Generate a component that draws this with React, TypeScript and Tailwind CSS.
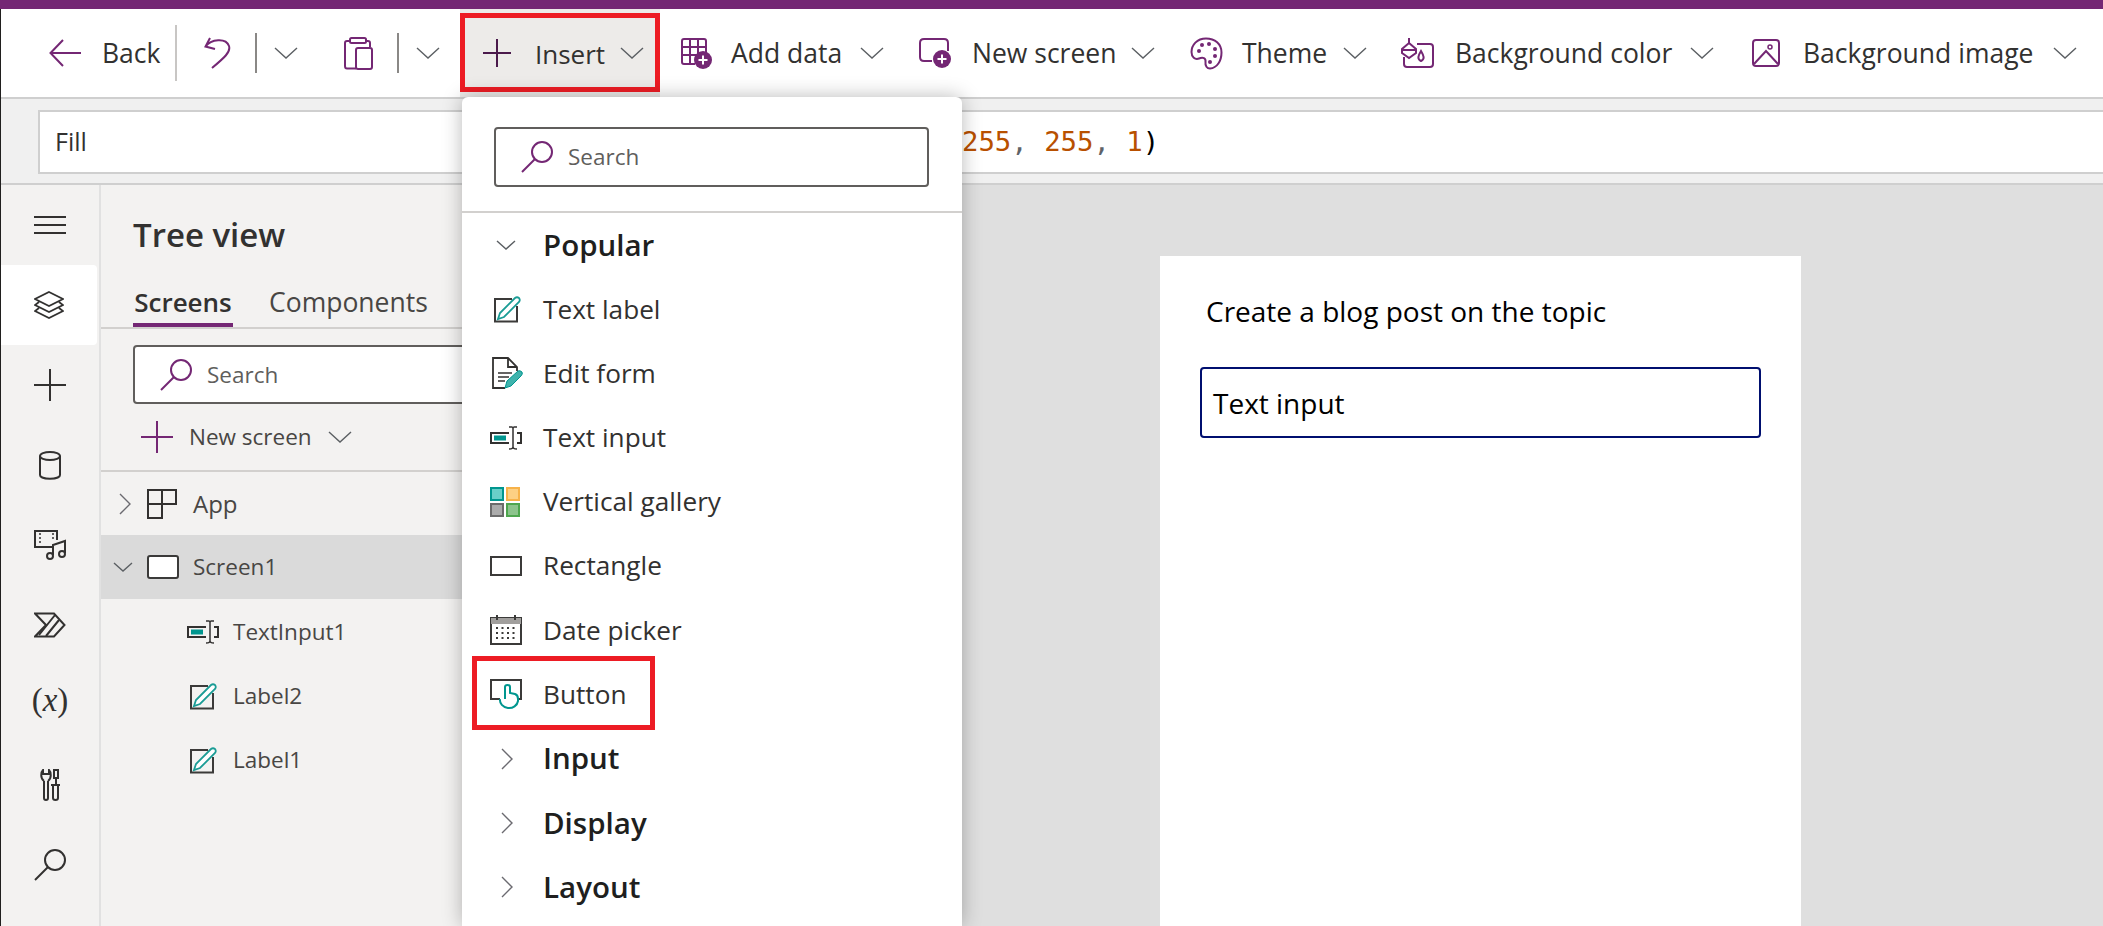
import type { ReactNode } from "react";

const PURPLE = "#742774";
const INK = "#323130";
const TEAL = "#00968f";

function Svg({ w, h, className, children }: { w: number; h: number; className?: string; children: ReactNode }) {
  return (
    <svg width={w} height={h} viewBox={`0 0 ${w} ${h}`} fill="none" className={`shrink-0 ${className ?? ""}`}>
      {children}
    </svg>
  );
}

function ChevronDown({ className, color = "#5b5f63", w = 24 }: { className?: string; color?: string; w?: number }) {
  const h = Math.round(w / 2);
  return (
    <Svg w={w} h={h} className={className}>
      <path d={`M1 1 L${w / 2} ${h - 1} L${w - 1} 1`} stroke={color} strokeWidth="1.4" />
    </Svg>
  );
}

function ChevronRight({ className }: { className?: string }) {
  return (
    <Svg w={12} h={22} className={className}>
      <path d="M1 1 L11 11 L1 21" stroke="#6b6a70" strokeWidth="1.4" />
    </Svg>
  );
}

function Plus({ size = 28, color = INK, className }: { size?: number; color?: string; className?: string }) {
  return (
    <Svg w={size} h={size} className={className}>
      <path d={`M0 ${size / 2} H${size} M${size / 2} 0 V${size}`} stroke={color} strokeWidth="2" />
    </Svg>
  );
}

function SearchIcon({ color = PURPLE, className }: { color?: string; className?: string }) {
  return (
    <Svg w={32} h={32} className={className}>
      <circle cx="21" cy="11" r="10" stroke={color} strokeWidth="2" />
      <path d="M14 18 L1 31" stroke={color} strokeWidth="2" />
    </Svg>
  );
}

function BackIcon({ className }: { className?: string }) {
  return (
    <Svg w={32} h={28} className={className}>
      <path d="M14 1 L1.5 14 L14 27 M1.5 14 H32" stroke={PURPLE} strokeWidth="2" />
    </Svg>
  );
}

function UndoIcon({ className }: { className?: string }) {
  return (
    <Svg w={27} h={32} className={className}>
      <path d="M6 1 L1.5 9.5 L11 12 M1.5 9.5 C7 2 22 0.5 25 9 C27 15 20 21 8 31" stroke={PURPLE} strokeWidth="2" />
    </Svg>
  );
}

function ClipboardIcon({ className }: { className?: string }) {
  return (
    <Svg w={29} h={33} className={className}>
      <path d="M6 4 H3 Q1 4 1 6 V29 Q1 31.5 3 31.5 H12 M22 4 H24 Q26 4 26 6 V10" stroke={PURPLE} strokeWidth="2" />
      <rect x="6" y="1" width="16" height="5" rx="1.5" stroke={PURPLE} strokeWidth="2" />
      <rect x="12" y="11" width="16" height="21" rx="2" stroke={PURPLE} strokeWidth="2" />
    </Svg>
  );
}

function PlusBadge({ cx, cy }: { cx: number; cy: number }) {
  return (
    <>
      <circle cx={cx} cy={cy} r="9" fill={PURPLE} />
      <path d={`M${cx - 4.5} ${cy} H${cx + 4.5} M${cx} ${cy - 4.5} V${cy + 4.5}`} stroke="white" strokeWidth="2" />
    </>
  );
}

function AddDataIcon({ className }: { className?: string }) {
  return (
    <Svg w={31} h={31} className={className}>
      <path
        d="M14 26 H3 Q1 26 1 24 V3 Q1 1 3 1 H23 Q25 1 25 3 V15 M1 9 H25 M1 17 H17 M9 1 V26 M17 1 V18"
        stroke={PURPLE}
        strokeWidth="2"
      />
      <PlusBadge cx={22} cy={22} />
    </Svg>
  );
}

function NewScreenIcon({ className }: { className?: string }) {
  return (
    <Svg w={32} h={30} className={className}>
      <path d="M13 23 H5 Q1 23 1 19 V5 Q1 1 5 1 H25 Q29 1 29 5 V13" stroke={PURPLE} strokeWidth="2" />
      <PlusBadge cx={23} cy={21} />
    </Svg>
  );
}

function ThemeIcon({ className }: { className?: string }) {
  return (
    <Svg w={33} h={33} className={className}>
      <path
        d="M16 1.5 C7 1.5 1.5 8 1.5 15 C1.5 20 5 23 9 21.5 C13 20 16 21 15.5 25 C15 29 17 31.5 20 31.5 C27 31 31.5 24 31.5 15.5 C31.5 7 25 1.5 16 1.5 Z"
        stroke={PURPLE}
        strokeWidth="2"
      />
      <circle cx="9" cy="14" r="2" fill={PURPLE} />
      <circle cx="12" cy="8" r="2" fill={PURPLE} />
      <circle cx="19" cy="7" r="2" fill={PURPLE} />
      <circle cx="25" cy="12" r="2" fill={PURPLE} />
      <circle cx="25" cy="19" r="2" fill={PURPLE} />
      <circle cx="20" cy="25" r="2" fill={PURPLE} />
    </Svg>
  );
}

function BgColorIcon({ className }: { className?: string }) {
  return (
    <Svg w={33} h={30} className={className}>
      <path d="M16 6 H29 Q32 6 32 9 V26 Q32 29 29 29 H6 Q3 29 3 26 V19" stroke={PURPLE} strokeWidth="2" />
      <path d="M8 0 V5 M8 5 L15 11 V15 L8 20 L1 15 V11 Z M1 12 H15" stroke={PURPLE} strokeWidth="2" fill="white" />
      <path d="M20 13 C17 18 16 21 20 23 C24 21 23 18 20 13 Z" stroke={PURPLE} strokeWidth="2" />
    </Svg>
  );
}

function BgImageIcon({ className }: { className?: string }) {
  return (
    <Svg w={28} h={28} className={className}>
      <rect x="1" y="1" width="26" height="26" rx="3" stroke={PURPLE} strokeWidth="2" />
      <path d="M2 25 L14 12 L26 25" stroke={PURPLE} strokeWidth="2" />
      <circle cx="18" cy="8" r="2" stroke={PURPLE} strokeWidth="1.5" />
    </Svg>
  );
}

function LayersIcon() {
  return (
    <Svg w={30} h={28}>
      <path
        d="M15 1 L29 8 L15 15 L1 8 Z M5 11 L1 14 L15 21 L29 14 L25 11 M5 17 L1 20 L15 27 L29 20 L25 17"
        stroke={INK}
        strokeWidth="1.8"
      />
    </Svg>
  );
}

function CylinderIcon() {
  return (
    <Svg w={22} h={29}>
      <path d="M1 5 V24 C1 29 21 29 21 24 V5" stroke={INK} strokeWidth="2" />
      <ellipse cx="11" cy="5" rx="10" ry="4" stroke={INK} strokeWidth="2" />
    </Svg>
  );
}

function MediaIcon() {
  return (
    <Svg w={32} h={30}>
      <path d="M18 17 H1 V1 H23 V10" stroke={INK} strokeWidth="2" />
      <path d="M6 3 V15 M19 3 V9" stroke={INK} strokeWidth="1.5" strokeDasharray="2 2" />
      <path d="M19 25 V15 L31 11 V23" stroke={INK} strokeWidth="2" />
      <circle cx="16" cy="26" r="3" stroke={INK} strokeWidth="2" />
      <circle cx="28" cy="24" r="3" stroke={INK} strokeWidth="2" />
    </Svg>
  );
}

function FlowIcon() {
  return (
    <Svg w={32} h={26}>
      <path d="M12 13 L1 1.5 H20 L30.5 13 L20 24.5 H1 Z" stroke={INK} strokeWidth="2" />
      <path d="M21 3 L5 23 M25 8 L12 24" stroke={INK} strokeWidth="2" />
    </Svg>
  );
}

function ToolsIcon() {
  return (
    <Svg w={20} h={32}>
      <path
        d="M4 12 V29 Q4 31 6 31 Q8 31 8 29 V12 M4 12 C0 9 1 3 3 1 V5 H9 V1 C11 3 12 9 8 12"
        stroke={INK}
        strokeWidth="2"
      />
      <path d="M14 1 H18 V9 H14 Z M16 9 V15 M11 16 H20 M13 16 V29 Q13 31 15.5 31 Q18 31 18 29 V16" stroke={INK} strokeWidth="2" />
    </Svg>
  );
}

function AppIcon() {
  return (
    <Svg w={30} h={30}>
      <path d="M1 1 H15 V29 H1 Z M1 15 H29 V1 H15" stroke={INK} strokeWidth="2" />
    </Svg>
  );
}

function TextInputIcon({ className }: { className?: string }) {
  return (
    <Svg w={32} h={24} className={className}>
      <path d="M19 7 H1 V17 H19" stroke={INK} strokeWidth="2" />
      <rect x="4" y="9.5" width="12" height="5" fill={TEAL} />
      <path d="M19 1 H22 Q23 1 23 3 V21 Q23 23 19 23 M27 1 H24 Q23 1 23 3 M23 21 Q23 23 27 23" stroke={INK} strokeWidth="1.5" />
      <path d="M27 7 H31 V17 H27" stroke={INK} strokeWidth="2" />
    </Svg>
  );
}

function LabelIcon({ className }: { className?: string }) {
  return (
    <Svg w={27} h={27} className={className}>
      <path d="M18 3 H1 V25.5 H23 V10" stroke="#3b3a39" strokeWidth="2" />
      <path
        d="M4 23 L6 17 L21 2 Q23 0.5 25 2 Q26.5 4 25 6 L10 21 Z"
        fill="white"
        stroke="#1a9c95"
        strokeWidth="1.8"
      />
    </Svg>
  );
}

function EditFormIcon({ className }: { className?: string }) {
  return (
    <Svg w={31} h={32} className={className}>
      <path d="M13 31 H1 V1 H16 L25 10 V14 M16 1 V10 H25" stroke={INK} strokeWidth="1.8" />
      <path d="M6 16 H20 M6 20 H17 M6 24 H13" stroke={INK} strokeWidth="1.5" />
      <path d="M13 31 L15 24 L26 14 Q28 13 30 15 Q31 17 29 19 L19 29 Z" fill="#3fb3ad" stroke={TEAL} strokeWidth="1" />
    </Svg>
  );
}

function GalleryIcon({ className }: { className?: string }) {
  return (
    <div className={`grid w-[30px] shrink-0 grid-cols-2 gap-[2px] ${className ?? ""}`}>
      <div className="h-[14px] w-[14px] border-2 border-[#00968f] bg-[#69cfc9]" />
      <div className="h-[14px] w-[14px] border-2 border-[#f7b24a] bg-[#fdd084]" />
      <div className="h-[14px] w-[14px] border-2 border-[#6b6b6b] bg-[#ababab]" />
      <div className="h-[14px] w-[14px] border-2 border-[#4ea64e] bg-[#8cc48c]" />
    </div>
  );
}

function RectangleIcon() {
  return <div className="h-[20px] w-[32px] shrink-0 border-2 border-[#3b3a39]" />;
}

function DateIcon() {
  return (
    <Svg w={32} h={30}>
      <rect x="1" y="3" width="30" height="26" stroke="#3b3a39" strokeWidth="2" />
      <rect x="1" y="3" width="30" height="6" fill="#a19f9d" />
      <path d="M7 0 V5 M25 0 V5" stroke="#3b3a39" strokeWidth="2" />
      <path d="M6 13 H26 M6 18 H26 M6 23 H26" stroke="#3b3a39" strokeWidth="2" strokeDasharray="2 3.5" />
    </Svg>
  );
}

function ButtonIcon() {
  return (
    <Svg w={32} h={31}>
      <path d="M10 20 H1 V1 H31 V20 H28" stroke="#3b3a39" strokeWidth="2" />
      <path
        d="M15 20 V8 Q15 6 17.5 6 Q20 6 20 8 V14 L25 15 Q28 16 28 20 V22 A9 8 0 1 1 10 20"
        fill="white"
        stroke={TEAL}
        strokeWidth="2"
      />
    </Svg>
  );
}

function Toolbar() {
  return (
    <div className="flex h-[88px] items-center whitespace-nowrap text-[26.5px] text-[#323130]">
      <BackIcon className="ml-[48px]" />
      <span className="ml-[21px] mt-[2px] w-[56px]">Back</span>
      <div className="ml-[17px] h-[56px] w-[2px] bg-[#c8c6c4]" />
      <UndoIcon className="ml-[27px]" />
      <div className="ml-[24px] h-[40px] w-[2px] bg-[#8a8886]" />
      <ChevronDown className="ml-[17px]" />
      <ClipboardIcon className="ml-[46px]" />
      <div className="ml-[24px] h-[40px] w-[2px] bg-[#8a8886]" />
      <ChevronDown className="ml-[17px]" />

      <div className="relative ml-[20px] flex h-full w-[200px] items-center bg-[#edebe9]">
        <div className="absolute left-0 top-[4px] h-[79px] w-[200px] border-[5px] border-[#ed1c24]" />
        <Plus color="#4b1a4b" className="ml-[23px]" />
        <span className="ml-[24px] mt-[2px] w-[69px] text-[26px]">Insert</span>
        <ChevronDown className="ml-[16px]" />
      </div>

      <AddDataIcon className="ml-[21px]" />
      <span className="ml-[19px] mt-[2px] w-[113px]">Add data</span>
      <ChevronDown className="ml-[16px]" />
      <NewScreenIcon className="ml-[35px]" />
      <span className="ml-[21px] mt-[2px] w-[142px]">New screen</span>
      <ChevronDown className="ml-[17px]" />
      <ThemeIcon className="ml-[35px]" />
      <span className="ml-[19px] mt-[2px] w-[84px]">Theme</span>
      <ChevronDown className="ml-[17px]" />
      <BgColorIcon className="ml-[34px]" />
      <span className="ml-[21px] mt-[2px] w-[218px]">Background color</span>
      <ChevronDown className="ml-[17px]" />
      <BgImageIcon className="ml-[38px]" />
      <span className="ml-[23px] mt-[2px] w-[233px]">Background image</span>
      <ChevronDown className="ml-[17px]" />
    </div>
  );
}

function FormulaBar() {
  return (
    <div className="h-[88px] border-y-2 border-[#cfcfcf] bg-[#f0f0f0] pl-[37px] pt-[11px]">
      <div className="flex h-[64px] items-center border-y-2 border-l-2 border-[#cfcfcf] bg-white">
        <span className="ml-[15px] w-[34px] text-[25px] text-[#323130]">Fill</span>
        <span className="ml-[873px] whitespace-nowrap font-['DejaVu_Sans_Mono',monospace] text-[27.3px] text-[#b85000]">
          255<span className="text-[#5f6368]">,</span> 255<span className="text-[#5f6368]">,</span> 1
          <span className="text-black">)</span>
        </span>
      </div>
    </div>
  );
}

function Sidebar() {
  return (
    <div className="flex w-[100px] shrink-0 flex-col border-r-2 border-[#e1e1e1] bg-[#f3f2f1]">
      <div className="flex h-[80px] items-center justify-center">
        <Svg w={32} h={18}>
          <path d="M0 1 H32 M0 9 H32 M0 17 H32" stroke={INK} strokeWidth="2" />
        </Svg>
      </div>
      <div className="flex h-[80px] w-[96px] items-center justify-center rounded-r-[4px] bg-white">
        <LayersIcon />
      </div>
      <div className="flex h-[80px] items-center justify-center">
        <Plus size={32} />
      </div>
      <div className="flex h-[80px] items-center justify-center">
        <CylinderIcon />
      </div>
      <div className="flex h-[80px] items-center justify-center">
        <MediaIcon />
      </div>
      <div className="flex h-[80px] items-center justify-center">
        <FlowIcon />
      </div>
      <div className="flex h-[80px] items-center justify-center pb-[8px] font-['Liberation_Serif',serif] text-[33px] text-[#323130]">
        (<span className="italic">x</span>)
      </div>
      <div className="flex h-[80px] items-center justify-center">
        <ToolsIcon />
      </div>
      <div className="flex h-[80px] items-center justify-center">
        <SearchIcon color={INK} />
      </div>
    </div>
  );
}

function TreeRow({ icon, label }: { icon: ReactNode; label: string }) {
  return (
    <div className="flex h-[64px] items-center text-[22.5px] text-[#484644]">
      <div className="flex w-[132px] shrink-0 justify-end pr-[14px]">{icon}</div>
      <span>{label}</span>
    </div>
  );
}

function TreePanel() {
  return (
    <div className="flex w-[400px] shrink-0 flex-col bg-[#f3f2f1] text-[#323130]">
      <div className="flex h-[100px] items-center pl-[32px] text-[33px] font-semibold">Tree view</div>
      <div className="flex h-[44px] gap-[36px] border-b-2 border-[#d2d0ce] pl-[32px] text-[26.5px]">
        <div className="flex h-[42px] w-[100px] items-center justify-center border-b-4 border-[#742774] pb-[3px] text-[26px] font-semibold">
          Screens
        </div>
        <div className="flex h-[36px] items-center text-[#484644]">Components</div>
      </div>
      <div className="ml-[32px] mt-[16px] flex h-[59px] w-[500px] items-center rounded-[4px] border-2 border-[#605e5c] bg-white pl-[25px]">
        <SearchIcon />
        <span className="ml-[15px] text-[22.5px] text-[#605e5c]">Search</span>
      </div>
      <div className="flex h-[68px] items-center border-b-2 border-[#d2d0ce] pl-[40px] text-[22.5px] text-[#484644]">
        <Plus size={32} color={PURPLE} className="shrink-0" />
        <span className="ml-[16px]">New screen</span>
        <ChevronDown className="ml-[16px]" />
      </div>
      <div className="flex h-[63px] items-center pl-[18px] text-[24px] text-[#484644]">
        <ChevronRight />
        <div className="ml-[16px]">
          <AppIcon />
        </div>
        <span className="ml-[16px]">App</span>
      </div>
      <div className="flex h-[64px] items-center bg-[#dadada] pl-[12px] text-[22.5px] text-[#484644]">
        <ChevronDown w={20} />
        <div className="ml-[14px] h-[24px] w-[32px] rounded-[3px] border-2 border-[#3b3a39] bg-white" />
        <span className="ml-[14px]">Screen1</span>
      </div>
      <div className="h-[1px]" />
      <TreeRow icon={<TextInputIcon />} label="TextInput1" />
      <TreeRow icon={<LabelIcon className="mr-[2px]" />} label="Label2" />
      <TreeRow icon={<LabelIcon className="mr-[2px]" />} label="Label1" />
    </div>
  );
}

function Canvas() {
  return (
    <div className="min-w-0 flex-1 bg-[#dfdfdf] pl-[659px] pt-[71px]">
      <div className="h-full w-[641px] bg-white pl-[40px] text-black">
        <div className="flex h-[111px] items-center pb-[2px] pl-[6px] text-[28px]">Create a blog post on the topic</div>
        <div className="flex h-[71px] w-[561px] items-center rounded-[4px] border-2 border-[#000f6f] pl-[11px] text-[28px]">
          Text input
        </div>
      </div>
    </div>
  );
}

function GroupRow({ label, open }: { label: string; open?: boolean }) {
  return (
    <div className="flex h-[64.2px] items-center text-[29.5px] font-semibold text-[#201f1e]">
      <div className="flex w-[81px] shrink-0 justify-start pl-[34px]">
        {open ? <ChevronDown w={20} /> : <ChevronRight className="ml-[5px]" />}
      </div>
      <span>{label}</span>
    </div>
  );
}

function ItemRow({ icon, label }: { icon: ReactNode; label: string }) {
  return (
    <div className="flex h-[64.2px] items-center text-[26.2px] text-[#323130]">
      <div className="flex w-[81px] shrink-0 pl-[28px]">{icon}</div>
      <span>{label}</span>
    </div>
  );
}

function InsertMenu() {
  return (
    <div className="absolute left-[462px] top-[97px] h-[829px] w-[500px] rounded-t-[6px] bg-white shadow-[0_0_20px_rgba(0,0,0,0.28)]">
      <div className="h-[116px] border-b-2 border-[#d2d0ce] pl-[32px] pt-[30px]">
        <div className="flex h-[60px] w-[435px] items-center rounded-[4px] border-2 border-[#605e5c] pl-[25px]">
          <SearchIcon />
          <span className="ml-[15px] text-[22.5px] text-[#605e5c]">Search</span>
        </div>
      </div>
      <GroupRow label="Popular" open />
      <ItemRow icon={<LabelIcon className="ml-[4px]" />} label="Text label" />
      <ItemRow icon={<EditFormIcon className="ml-[2px]" />} label="Edit form" />
      <ItemRow icon={<TextInputIcon />} label="Text input" />
      <ItemRow icon={<GalleryIcon />} label="Vertical gallery" />
      <ItemRow icon={<RectangleIcon />} label="Rectangle" />
      <ItemRow icon={<DateIcon />} label="Date picker" />
      <div className="relative">
        <div className="absolute left-[10px] top-[-6px] h-[74px] w-[183px] border-[5px] border-[#ed1c24]" />
        <ItemRow icon={<ButtonIcon />} label="Button" />
      </div>
      <GroupRow label="Input" />
      <GroupRow label="Display" />
      <GroupRow label="Layout" />
    </div>
  );
}

export default function App() {
  return (
    <div className="relative h-[926px] w-[2103px] overflow-hidden bg-white font-['Open_Sans',sans-serif]">
      <div className="h-[9px] bg-[#742774]" />
      <div className="flex h-[917px] flex-col border-l border-[#201f1e]">
        <Toolbar />
        <FormulaBar />
        <div className="flex min-h-0 flex-1">
          <Sidebar />
          <TreePanel />
          <Canvas />
        </div>
      </div>
      <InsertMenu />
    </div>
  );
}
